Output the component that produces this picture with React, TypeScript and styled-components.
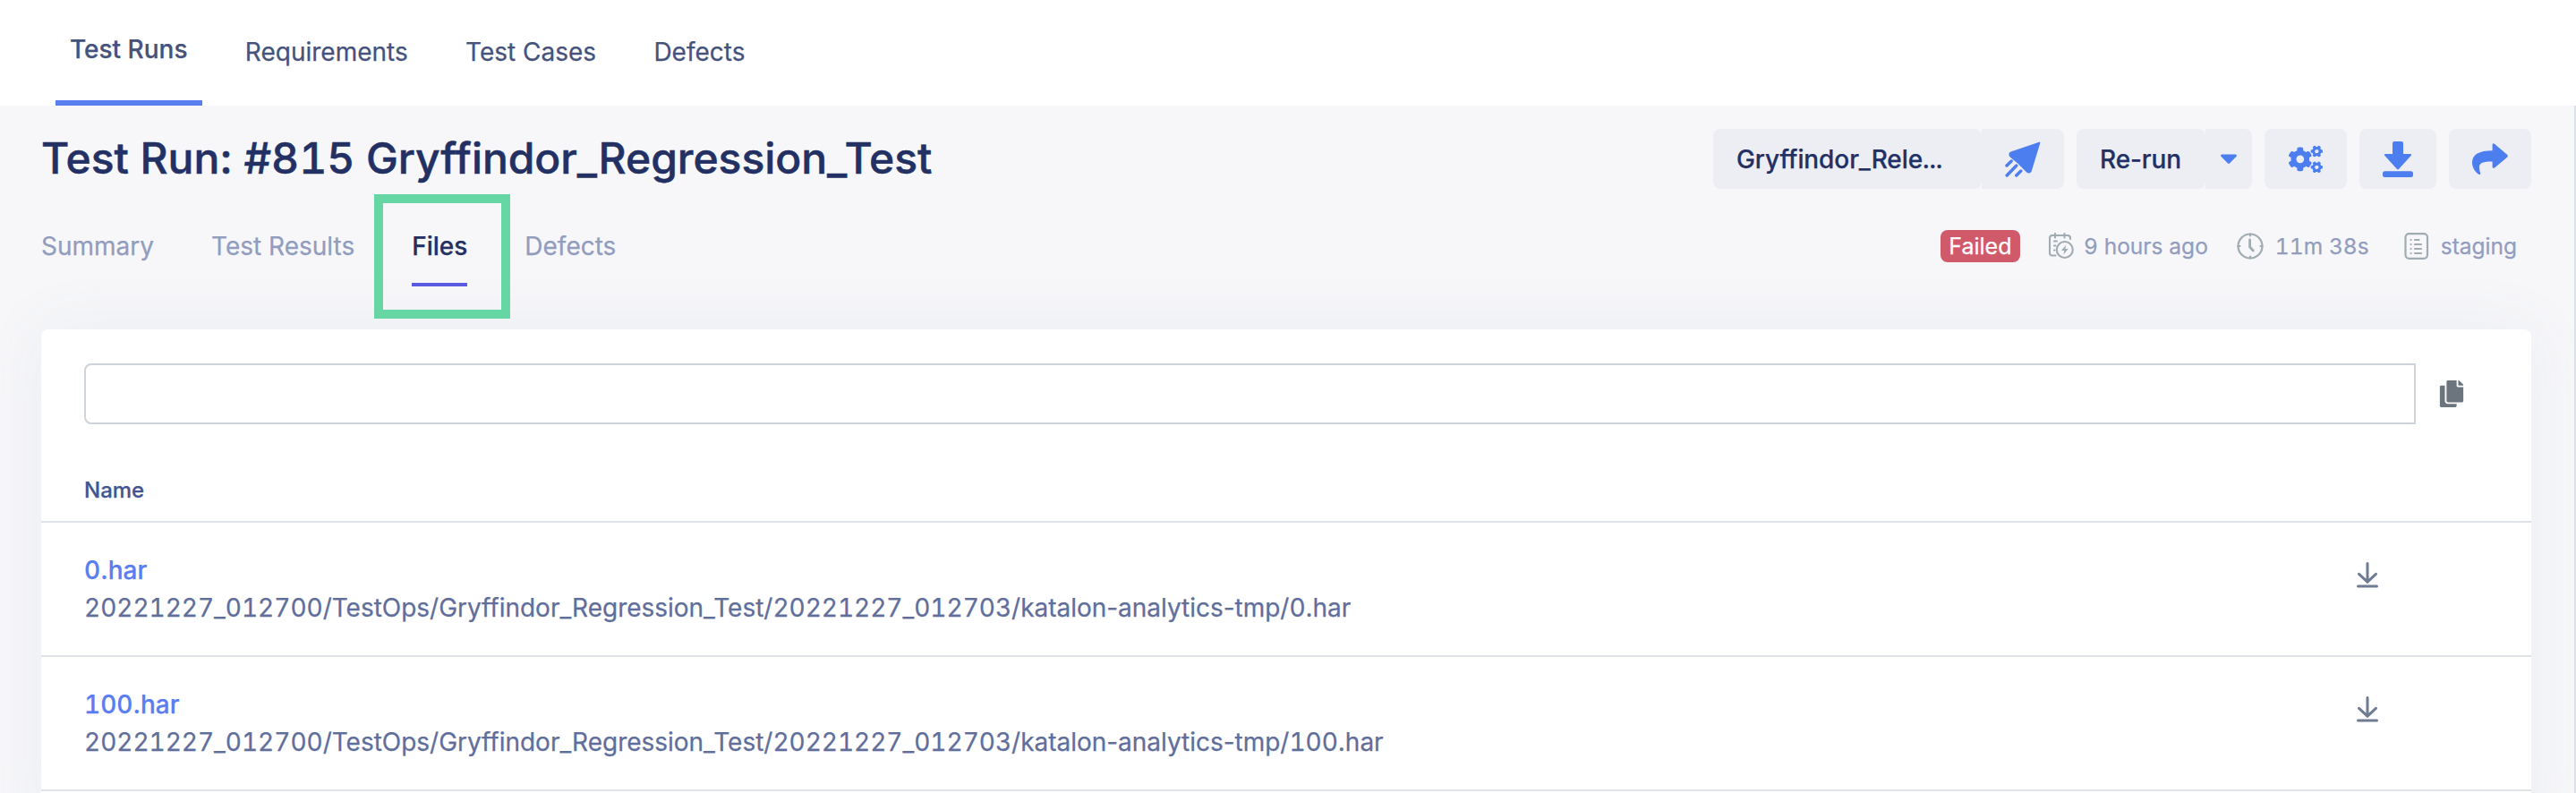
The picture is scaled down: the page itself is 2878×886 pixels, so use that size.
import React from "react";
import styled, { createGlobalStyle, css } from "styled-components";
import { FaCogs, FaCopy } from "react-icons/fa";

const GlobalStyle = createGlobalStyle`
  * {
    box-sizing: border-box;
  }
  body {
    margin: 0;
    overflow: hidden;
    background: #f7f7fa;
    font-family: Inter, "Liberation Sans", sans-serif;
    font-size: 28px;
    line-height: 34px;
    color: #233063;
    -webkit-text-stroke: 0.25px currentColor;
  }
`;

const Page = styled.div`
  height: 886px;
  display: flex;
  flex-direction: column;
  overflow: hidden;
`;

const Tabular = styled.span`
  font-variant-numeric: tabular-nums;
`;

const TopNav = styled.nav`
  flex: none;
  height: 118px;
  padding-left: 62px;
  display: flex;
  gap: 32.3px;
  background: #fff;
`;

const TopNavItem = styled.a<{ $active?: boolean }>`
  height: 118px;
  padding: 41px 16px 0;
  color: #45527c;
  ${(p) =>
    p.$active &&
    css`
      padding-top: 38px;
      font-weight: 500;
      border-bottom: 6px solid #597ef0;
    `}
`;

const Main = styled.main`
  flex: 1;
  min-height: 0;
  padding: 26px 48px 0 46px;
  border-right: 2px solid #dde1e7;
`;

const Header = styled.header`
  display: flex;
  justify-content: space-between;
  height: 67px;
`;

const Title = styled.h1`
  margin: 4px 0 0;
  font-size: 48px;
  line-height: 58px;
  font-weight: 500;
  letter-spacing: -0.05px;
  white-space: nowrap;
  -webkit-text-stroke-width: 0.5px;
`;

const Actions = styled.div`
  display: flex;
  gap: 14px;
`;

const ButtonGroup = styled.div`
  display: flex;
`;

const Button = styled.button<{ $width: number; $attached?: boolean; $text?: boolean }>`
  display: flex;
  align-items: center;
  justify-content: ${(p) => (p.$text ? "flex-start" : "center")};
  width: ${(p) => p.$width}px;
  height: 67px;
  padding: ${(p) => (p.$text ? "0 0 0 26px" : "0")};
  border: 0;
  border-radius: ${(p) => (p.$attached ? "0 8px 8px 0" : "8px")};
  background: #edeef4;
  color: ${(p) => (p.$text ? "#233063" : "#4d7ef0")};
  font: inherit;
  font-weight: 500;
  letter-spacing: -0.1px;
  white-space: nowrap;
`;

const SubHeader = styled.div`
  display: flex;
  justify-content: space-between;
  height: 157px;
  padding-top: 46px;
`;

const Tabs = styled.div`
  display: flex;
  gap: 64px;
  padding-top: 1px;
`;

const Tab = styled.a<{ $active?: boolean }>`
  position: relative;
  height: 62px;
  color: #929dbd;
  ${(p) =>
    p.$active &&
    css`
      color: #233063;
      font-weight: 500;
      border-bottom: 4px solid #5c5ae0;
    `}
`;

const Highlight = styled.span`
  position: absolute;
  left: -42px;
  top: -41px;
  width: 152px;
  height: 139px;
  border: 10px solid #66d6a4;
`;

const Status = styled.div`
  display: flex;
  align-items: center;
  height: 36px;
  padding-right: 16px;
  font-size: 24.5px;
  color: #929dbd;
  white-space: nowrap;
`;

const Badge = styled.span`
  display: flex;
  align-items: center;
  justify-content: center;
  width: 89px;
  height: 36px;
  border-radius: 8px;
  background: #d05a6a;
  color: #fff;
  font-size: 25px;
`;

const Meta = styled.span<{ $before: number; $gap: number }>`
  display: flex;
  align-items: center;
  gap: ${(p) => p.$gap}px;
  margin-left: ${(p) => p.$before}px;
`;

const Card = styled.section`
  height: 560px;
  border-radius: 8px;
  background: #fff;
  box-shadow: 0 0 70px rgba(90, 110, 110, 0.08);
`;

const PathBar = styled.div`
  display: flex;
  align-items: center;
  gap: 25px;
  height: 144px;
  padding: 0 74px 0 48px;
`;

const PathInput = styled.input`
  flex: 1;
  height: 68px;
  border: 2px solid #ced4da;
  border-radius: 8px 0 0 8px;
  background: #fff;
  outline: none;
`;

const ColumnHeader = styled.div`
  height: 72px;
  padding: 21px 48px 0;
  border-bottom: 2px solid #dee2e6;
  font-size: 24px;
  line-height: 30px;
  font-weight: 500;
  color: #445490;
`;

const FileRow = styled.div`
  display: flex;
  justify-content: space-between;
  height: 150px;
  padding: 32px 171px 0 48px;
  border-bottom: 2px solid #dee2e6;
  line-height: 42px;
`;

const FileInfo = styled.div`
  display: flex;
  flex-direction: column;
`;

const FileLink = styled.a`
  font-weight: 500;
  color: #5a7df2;
`;

const FilePath = styled.span`
  color: #606e9b;
  letter-spacing: -0.02px;
`;

const RowAction = styled.span`
  display: flex;
  height: 30px;
  margin-top: 12px;
`;

const PlaneIcon = () => (
  <svg width="40" height="40" viewBox="0 0 40 40" fill="#4d7ef0">
    <path
      d="M38.500 1.500 28.800 33.300q-1.600 2.400-4 .6Q16 24 6 16.500q-1.700-2.800.8-4.100Z"
      stroke="#4d7ef0"
      strokeWidth="1.800"
      strokeLinejoin="round"
    />
    <path d="M2 27 7.200 22M2.200 38 12.800 27M12.800 38 17.800 33" stroke="#4d7ef0" strokeWidth="3.400" strokeLinecap="round" />
  </svg>
);

const CaretIcon = () => (
  <svg width="20" height="12" viewBox="0 0 20 12" fill="#4d7ef0">
    <path d="M2 .6h16q1.6.8.6 2.2L11 10.600q-1 .9-2 0L1.400 2.800Q.4 1.400 2 .6Z" />
  </svg>
);

const DownloadIcon = () => (
  <svg width="34" height="40" viewBox="0 0 34 40" fill="#4d7ef0">
    <path d="M13 0h8q2 0 2 2v12h8q2 .2.8 1.800L18 31q-1 .9-2 0L2.200 15.800Q1 14.200 3 14h8V2q0-2 2-2Z" />
    <rect y="33.300" width="34" height="6.700" rx="2.500" />
  </svg>
);

const ShareIcon = () => (
  <svg width="40" height="36" viewBox="0 0 40 36" fill="#4d7ef0">
    <path d="M22.600 1.500q.5-2 2.400-.8L39.300 13q1 1.200 0 2.400L25 27.600q-1.900 1-2.400-.8V20.500C13 20.400 7.600 21.500 8 27.500q.2 3.500 1.300 6-.2 2.300-2 1.200C2.500 31.500 0 26.500 0 21.500 0 12.500 7.500 8.300 22.600 8.200Z" />
  </svg>
);

const CalendarIcon = () => (
  <svg width="28" height="30" viewBox="0 0 28 30" fill="none" stroke="#a0acb2" strokeWidth="2.100" strokeLinecap="round">
    <path d="M7.500 25.500H4q-3 0-3-3V6q0-3 3-3h17q3 0 3 3v1M7 1v4.500M17.500 1v4.500M6 9.500h3M6 14.500h1.500M6 19.500h.5" />
    <circle cx="17.800" cy="19" r="9" />
    <path d="M19.300 13.500 14 20h3.300l-1 4.500 5.400-6.500h-3.400Z" fill="#a0acb2" stroke="none" />
  </svg>
);

const ClockIcon = () => (
  <svg width="30" height="30" viewBox="0 0 30 30" fill="none" stroke="#a0acb2" strokeWidth="2.200" strokeLinecap="round">
    <circle cx="15" cy="15" r="13.500" />
    <path d="M15 1.500v2M15 26.500v2M1.500 15h2M26.500 15h2" />
    <path d="M14.600 8v8l3.700 4" strokeWidth="2.800" />
  </svg>
);

const ListIcon = () => (
  <svg width="28" height="30" viewBox="0 0 28 30" fill="none" stroke="#a0acb2" strokeWidth="2.200" strokeLinecap="round">
    <rect x="1.500" y="1.200" width="24.500" height="27.600" rx="4" />
    <path d="M12 8h4.500M12 13h7M12 18h7M12 23h7M7.500 8h.1M7.500 13h.1M7.500 18h.1M7.500 23h.1" />
  </svg>
);

const RowDownloadIcon = () => (
  <svg width="24" height="29" viewBox="0 0 24 29" fill="none" stroke="#6f7b92" strokeWidth="3" strokeLinecap="round">
    <path d="M12 1.500v20M2.500 13.300 12 22.200l9.500-8.900" />
    <path d="M1.500 27h21" />
  </svg>
);

/* Sets runs of digits in fixed-width figures and leaves other characters proportional. */
const Figures = ({ text }: { text: string }) => (
  <span>
    {text.split(/(\d+)/).map((part, i) => (i % 2 ? <Tabular key={i}>{part}</Tabular> : part))}
  </span>
);

const ROOT = "20221227_012700/TestOps/Gryffindor_Regression_Test/20221227_012703/katalon-analytics-tmp/";
const FILES = ["0.har", "100.har"];

export default function App() {
  return (
    <Page>
      <GlobalStyle />
      <TopNav>
        <TopNavItem $active>Test Runs</TopNavItem>
        <TopNavItem>Requirements</TopNavItem>
        <TopNavItem>Test Cases</TopNavItem>
        <TopNavItem>Defects</TopNavItem>
      </TopNav>
      <Main>
        <Header>
          <Title>
            <Figures text="Test Run: #815 Gryffindor_Regression_Test" />
          </Title>
          <Actions>
            <ButtonGroup>
              <Button $width={300} $text>
                <Tabular>Gryffindor_Rele...</Tabular>
              </Button>
              <Button $width={92} $attached>
                <PlaneIcon />
              </Button>
            </ButtonGroup>
            <ButtonGroup>
              <Button $width={144} $text>
                Re-run
              </Button>
              <Button $width={52} $attached>
                <CaretIcon />
              </Button>
            </ButtonGroup>
            <Button $width={92}>
              <FaCogs size={38} />
            </Button>
            <Button $width={86}>
              <DownloadIcon />
            </Button>
            <Button $width={92}>
              <ShareIcon />
            </Button>
          </Actions>
        </Header>
        <SubHeader>
          <Tabs>
            <Tab>Summary</Tab>
            <Tab>Test Results</Tab>
            <Tab $active>
              Files
              <Highlight />
            </Tab>
            <Tab>Defects</Tab>
          </Tabs>
          <Status>
            <Badge>Failed</Badge>
            <Meta $before={32} $gap={11}>
              <CalendarIcon />
              <Figures text="9 hours ago" />
            </Meta>
            <Meta $before={32} $gap={13}>
              <ClockIcon />
              <Figures text="11m 38s" />
            </Meta>
            <Meta $before={39} $gap={13}>
              <ListIcon />
              staging
            </Meta>
          </Status>
        </SubHeader>
        <Card>
          <PathBar>
            <PathInput aria-label="File path" />
            <FaCopy size={30} color="#6c757d" />
          </PathBar>
          <ColumnHeader>Name</ColumnHeader>
          {FILES.map((name) => (
            <FileRow key={name}>
              <FileInfo>
                <FileLink>
                  <Figures text={name} />
                </FileLink>
                <FilePath>
                  <Figures text={ROOT + name} />
                </FilePath>
              </FileInfo>
              <RowAction>
                <RowDownloadIcon />
              </RowAction>
            </FileRow>
          ))}
        </Card>
      </Main>
    </Page>
  );
}
